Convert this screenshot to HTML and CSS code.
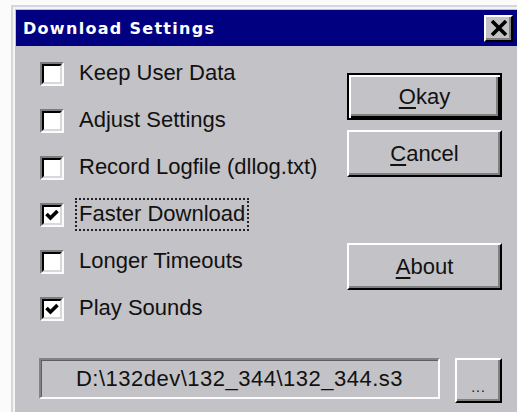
FILE: index.html
```html
<!DOCTYPE html>
<html lang="en">
<head>
<meta charset="utf-8">
<title>Download Settings</title>
<link rel="stylesheet" href="styles.css">
</head>
<body>
<div class="window">
  <div class="titlebar">
    <span class="title">Download Settings</span>
    <button class="close" aria-label="Close">
      <svg width="18" height="16" viewBox="0 0 18 16"><path d="M2 1 L16 15 M16 1 L2 15" stroke="#000" stroke-width="3.6" fill="none"/></svg>
    </button>
  </div>
  <div class="dialog">
    <div class="main">
      <ul class="options">
        <li class="option"><span class="check"><span class="check-inner"></span></span><span class="label">Keep User Data</span></li>
        <li class="option"><span class="check"><span class="check-inner"></span></span><span class="label">Adjust Settings</span></li>
        <li class="option"><span class="check"><span class="check-inner"></span></span><span class="label">Record Logfile (dllog.txt)</span></li>
        <li class="option"><span class="check"><span class="check-inner"><svg class="tick" width="16" height="16" viewBox="0 0 16 16"><path d="M2.5 7 L6.5 11 L13.5 4" stroke="#000" stroke-width="3.6" fill="none"/></svg></span></span><span class="label focused">Faster Download</span></li>
        <li class="option"><span class="check"><span class="check-inner"></span></span><span class="label">Longer Timeouts</span></li>
        <li class="option"><span class="check"><span class="check-inner"><svg class="tick" width="16" height="16" viewBox="0 0 16 16"><path d="M2.5 7 L6.5 11 L13.5 4" stroke="#000" stroke-width="3.6" fill="none"/></svg></span></span><span class="label">Play Sounds</span></li>
      </ul>
      <div class="actions">
        <button class="btn btn-default"><u>O</u>kay</button>
        <button class="btn btn-cancel"><u>C</u>ancel</button>
        <button class="btn btn-about"><u>A</u>bout</button>
      </div>
    </div>
    <div class="path-row">
      <div class="path-field">D:\132dev\132_344\132_344.s3</div>
      <button class="btn btn-browse">...</button>
    </div>
  </div>
</div>
</body>
</html>
```

FILE: styles.css
```css
html, body {
  margin: 0;
  padding: 0;
  overflow: hidden;
  background: #fbfbfb;
}

body {
  width: 517px;
  height: 412px;
}

/* dialog frame: light outer line, white highlight, grey face */
.window {
  margin: 5px 0 0 11px;
  width: 501px;
  height: 420px;
  background: #c3c2c6;
  border-left: 2px solid #d7d6d9;
  border-top: 2px solid #d7d6d9;
  box-shadow: inset 2px 2px 0 #f4f4f4;
  padding: 3px 0 0 3px;
  font-family: "Liberation Sans", Arial, sans-serif;
  color: #111;
}

.titlebar {
  height: 36px;
  background: #000080;
  display: flex;
  align-items: center;
  justify-content: space-between;
  padding-left: 7px;
  padding-right: 4px;
}

.title {
  font-family: "DejaVu Sans", sans-serif;
  font-weight: bold;
  font-size: 16px;
  letter-spacing: 1.3px;
  color: #fff;
}

.close {
  width: 29px;
  height: 27px;
  padding: 0;
  margin: 0;
  background: #c3c2c6;
  border: 2px solid;
  border-color: #fff #000 #000 #fff;
  box-shadow: inset -2px -2px 0 #808080;
  display: flex;
  align-items: center;
  justify-content: center;
}

.close svg {
  display: block;
  margin: 0 0 1px 1px;
}

.dialog {
  padding: 4px 0 0 24px;
}

.main {
  display: grid;
  grid-template-columns: 307px 155px;
}

.options {
  list-style: none;
  margin: 0;
  padding: 0;
}

.option {
  height: 47px;
  display: flex;
  align-items: center;
}

/* sunken check box: grey/white outer bevel, black/light inner bevel */
.check {
  width: 20px;
  height: 20px;
  border: 2px solid;
  border-color: #7c7b7e #fbfbfb #fbfbfb #7c7b7e;
  flex: none;
}

.check-inner {
  display: block;
  box-sizing: border-box;
  width: 20px;
  height: 20px;
  background: #fff;
  border: 2px solid;
  border-color: #000 #d8d7da #d8d7da #000;
}

.tick {
  display: block;
}

.label {
  margin-left: 11px;
  padding: 4px 2px 5px;
  border: 2px dotted transparent;
  font-size: 22px;
  line-height: 20px;
  white-space: nowrap;
}

.label.focused {
  border-color: #222;
}

.actions {
  display: flex;
  flex-direction: column;
  padding-top: 23px;
}

.btn {
  font-family: "Liberation Sans", Arial, sans-serif;
  font-size: 22px;
  color: #111;
  background: #c3c2c6;
  width: 155px;
  height: 47px;
  padding: 0;
  margin: 0;
  border: 2px solid;
  border-color: #fff #000 #000 #fff;
  box-shadow: inset -2px -2px 0 #808080;
}

.btn u {
  text-decoration-thickness: 2px;
  text-underline-offset: 3px;
}

.btn-default {
  border: 2px solid #000;
  box-shadow: inset 2px 2px 0 #fff, inset -2px -2px 0 #000, inset -4px -4px 0 #808080;
}

.btn-cancel {
  margin-top: 10px;
}

.btn-about {
  margin-top: 66px;
}

.path-row {
  display: flex;
  align-items: flex-start;
  margin-top: 26px;
}

.path-field {
  width: 401px;
  height: 41px;
  box-sizing: border-box;
  border: 2px solid;
  border-color: #838286 #fbfbfb #fbfbfb #838286;
  box-shadow: inset 1px 1px 0 #5e5d60;
  display: flex;
  align-items: center;
  justify-content: center;
  font-size: 22px;
  letter-spacing: 0.5px;
  margin-left: -1px;
}

.btn-browse {
  width: 47px;
  height: 45px;
  margin-left: 15px;
  font-size: 14px;
  line-height: 1;
  padding-top: 12px;
  letter-spacing: 1px;
}
```
